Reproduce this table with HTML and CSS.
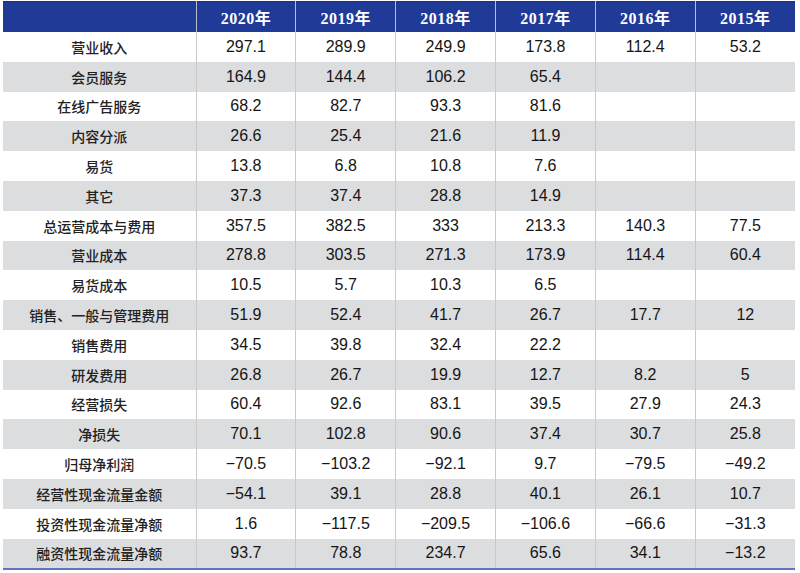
FILE: index.html
```html
<!DOCTYPE html>
<html lang="zh">
<head>
<meta charset="utf-8">
<link rel="stylesheet" href="styles.css">
</head>
<body>
<div class="wrap">
<table class="fin">
<colgroup><col class="c-label"><col><col><col><col><col><col></colgroup>
<thead>
<tr><th></th><th>2020年</th><th>2019年</th><th>2018年</th><th>2017年</th><th>2016年</th><th>2015年</th></tr>
</thead>
<tbody>
<tr><td>营业收入</td><td>297.1</td><td>289.9</td><td>249.9</td><td>173.8</td><td>112.4</td><td>53.2</td></tr>
<tr><td>会员服务</td><td>164.9</td><td>144.4</td><td>106.2</td><td>65.4</td><td></td><td></td></tr>
<tr><td>在线广告服务</td><td>68.2</td><td>82.7</td><td>93.3</td><td>81.6</td><td></td><td></td></tr>
<tr><td>内容分派</td><td>26.6</td><td>25.4</td><td>21.6</td><td>11.9</td><td></td><td></td></tr>
<tr><td>易货</td><td>13.8</td><td>6.8</td><td>10.8</td><td>7.6</td><td></td><td></td></tr>
<tr><td>其它</td><td>37.3</td><td>37.4</td><td>28.8</td><td>14.9</td><td></td><td></td></tr>
<tr><td>总运营成本与费用</td><td>357.5</td><td>382.5</td><td>333</td><td>213.3</td><td>140.3</td><td>77.5</td></tr>
<tr><td>营业成本</td><td>278.8</td><td>303.5</td><td>271.3</td><td>173.9</td><td>114.4</td><td>60.4</td></tr>
<tr><td>易货成本</td><td>10.5</td><td>5.7</td><td>10.3</td><td>6.5</td><td></td><td></td></tr>
<tr><td>销售、一般与管理费用</td><td>51.9</td><td>52.4</td><td>41.7</td><td>26.7</td><td>17.7</td><td>12</td></tr>
<tr><td>销售费用</td><td>34.5</td><td>39.8</td><td>32.4</td><td>22.2</td><td></td><td></td></tr>
<tr><td>研发费用</td><td>26.8</td><td>26.7</td><td>19.9</td><td>12.7</td><td>8.2</td><td>5</td></tr>
<tr><td>经营损失</td><td>60.4</td><td>92.6</td><td>83.1</td><td>39.5</td><td>27.9</td><td>24.3</td></tr>
<tr><td>净损失</td><td>70.1</td><td>102.8</td><td>90.6</td><td>37.4</td><td>30.7</td><td>25.8</td></tr>
<tr><td>归母净利润</td><td>−70.5</td><td>−103.2</td><td>−92.1</td><td>9.7</td><td>−79.5</td><td>−49.2</td></tr>
<tr><td>经营性现金流量金额</td><td>−54.1</td><td>39.1</td><td>28.8</td><td>40.1</td><td>26.1</td><td>10.7</td></tr>
<tr><td>投资性现金流量净额</td><td>1.6</td><td>−117.5</td><td>−209.5</td><td>−106.6</td><td>−66.6</td><td>−31.3</td></tr>
<tr><td>融资性现金流量净额</td><td>93.7</td><td>78.8</td><td>234.7</td><td>65.6</td><td>34.1</td><td>−13.2</td></tr>
</tbody>
</table>
</div>
</body>
</html>
```

FILE: styles.css
```css
html, body {
  margin: 0;
  padding: 0;
  background: #ffffff;
}

.wrap {
  padding: 1px 5px 0 3px;
}

.fin {
  width: 792px;
  table-layout: fixed;
  border-collapse: collapse;
  border-top: 1px solid #2b3440;
  border-bottom: 2px solid #6373c2;
}

.c-label {
  width: 193px;
}

.fin th {
  height: 30px;
  padding: 0;
  background: #203a97;
  color: #ffffff;
  font-family: "Liberation Serif", "DejaVu Serif", "Noto Sans CJK SC", serif;
  font-weight: bold;
  font-size: 16px;
  letter-spacing: 0.5px;
  text-align: center;
  vertical-align: middle;
  border-left: 1px solid #b9bdd0;
}

.fin th:first-child {
  border-left: none;
}

.fin td {
  height: 29.8px;
  padding: 0;
  text-align: center;
  vertical-align: middle;
  font-family: "Liberation Sans", Arial, sans-serif;
  font-size: 16px;
  color: #151515;
  border-left: 1px solid #c9c9c9;
}

.fin td:first-child {
  border-left: none;
  font-family: "Noto Sans CJK SC", "Noto Sans", sans-serif;
  font-weight: 500;
  font-size: 14px;
  color: #222222;
}

.fin tbody tr:nth-child(even) td {
  background: #dcdddf;
}
```
